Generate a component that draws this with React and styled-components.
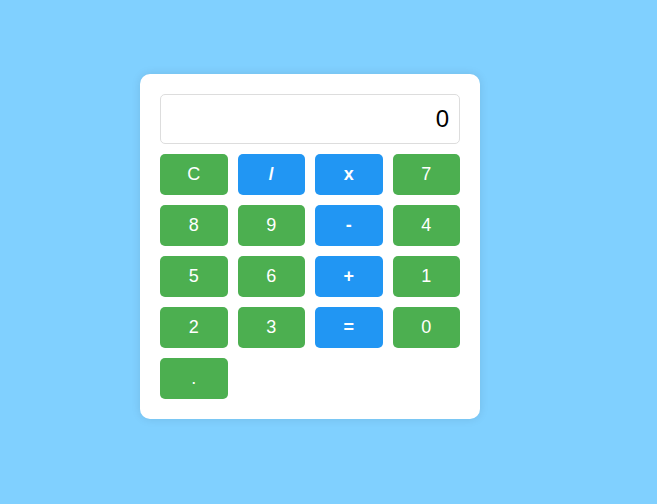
import styled, { createGlobalStyle } from "styled-components";

const GlobalStyle = createGlobalStyle`
  * {
    box-sizing: border-box;
  }
  body {
    margin: 0;
    background-color: #80d0ff;
    font-family: "Liberation Sans", Arial, sans-serif;
  }
`;

const keys = [
  { label: "C", kind: "num" },
  { label: "/", kind: "op" },
  { label: "x", kind: "op" },
  { label: "7", kind: "num" },
  { label: "8", kind: "num" },
  { label: "9", kind: "num" },
  { label: "-", kind: "op" },
  { label: "4", kind: "num" },
  { label: "5", kind: "num" },
  { label: "6", kind: "num" },
  { label: "+", kind: "op" },
  { label: "1", kind: "num" },
  { label: "2", kind: "num" },
  { label: "3", kind: "num" },
  { label: "=", kind: "op" },
  { label: "0", kind: "num" },
  { label: ".", kind: "num" },
];

function App() {
  return (
    <Page>
      <GlobalStyle />
      <Calculator>
        <Display>0</Display>
        <Keypad>
          {keys.map((key) => (
            <Key key={key.label} $kind={key.kind}>
              {key.label}
            </Key>
          ))}
        </Keypad>
      </Calculator>
    </Page>
  );
}

const Page = styled.div`
  width: 657px;
  height: 504px;
  padding: 74px 0 0 140px;
`;

const Calculator = styled.div`
  width: 340px;
  padding: 20px;
  background-color: #fff;
  border-radius: 10px;
  box-shadow: 0 0 10px rgba(0, 0, 0, 0.1);
`;

const Display = styled.div`
  height: 50px;
  margin-bottom: 10px;
  padding: 0 10px;
  border: 1px solid #ddd;
  border-radius: 5px;
  display: flex;
  align-items: center;
  justify-content: flex-end;
  font-size: 24px;
  color: #000;
`;

const Keypad = styled.div`
  display: grid;
  grid-template-columns: repeat(4, 1fr);
  gap: 10px;
`;

const Key = styled.button`
  height: 41px;
  border: none;
  border-radius: 5px;
  font-family: inherit;
  font-size: 18px;
  font-weight: ${({ $kind }) => ($kind === "op" ? 700 : 400)};
  color: #fff;
  cursor: pointer;
  background-color: ${({ $kind }) => ($kind === "op" ? "#2196f3" : "#4caf50")};
`;

export default App;
